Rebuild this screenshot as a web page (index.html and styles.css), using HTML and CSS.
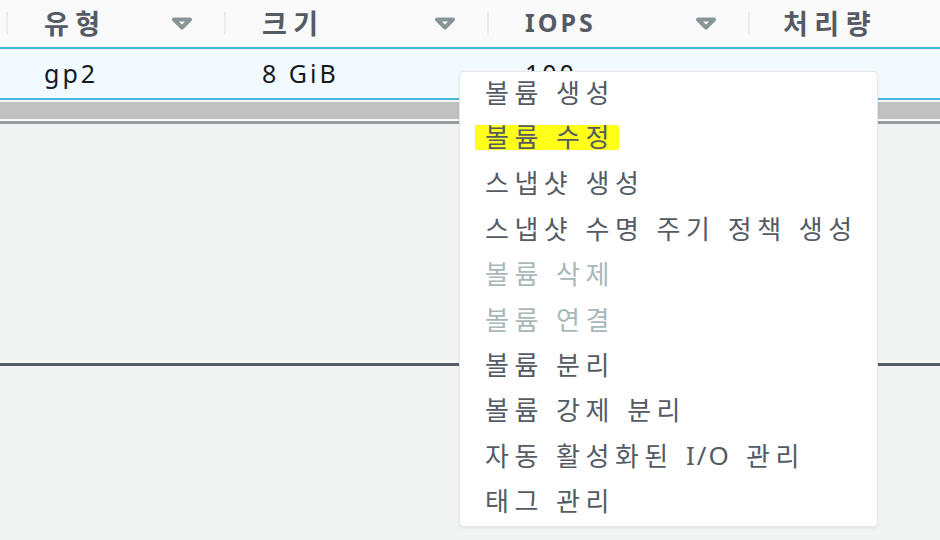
FILE: index.html
```html
<!DOCTYPE html>
<html lang="ko">
<head>
<meta charset="utf-8">
<title>볼륨</title>
<link rel="stylesheet" href="styles.css">
</head>
<body>
<div class="page">
  <div class="table">
    <div class="thead">
      <div class="th th-edge"></div>
      <div class="th"><span class="sep"></span><span class="label">유형</span><svg class="sort" width="22" height="13" viewBox="0 0 22 13"><path d="M3 2.5 H19 L11 10.5 Z" fill="none" stroke="#879596" stroke-width="4" stroke-linejoin="round"/></svg></div>
      <div class="th"><span class="sep"></span><span class="label">크기</span><svg class="sort" width="22" height="13" viewBox="0 0 22 13"><path d="M3 2.5 H19 L11 10.5 Z" fill="none" stroke="#879596" stroke-width="4" stroke-linejoin="round"/></svg></div>
      <div class="th"><span class="sep"></span><span class="label label-latin">IOPS</span><svg class="sort" width="22" height="13" viewBox="0 0 22 13"><path d="M3 2.5 H19 L11 10.5 Z" fill="none" stroke="#879596" stroke-width="4" stroke-linejoin="round"/></svg></div>
      <div class="th th-last"><span class="sep"></span><span class="label">처리량</span></div>
    </div>
    <div class="trow">
      <div class="td"></div>
      <div class="td">gp2</div>
      <div class="td">8 GiB</div>
      <div class="td">100</div>
      <div class="td"></div>
    </div>
    <div class="hscroll">
      <div class="hscroll-bar"></div>
    </div>
  </div>
  <div class="blank"></div>
  <div class="divider"></div>

  <ul class="menu">
    <li class="item">볼륨 생성</li>
    <li class="item"><span class="mark">볼륨 수정</span></li>
    <li class="item">스냅샷 생성</li>
    <li class="item">스냅샷 수명 주기 정책 생성</li>
    <li class="item disabled">볼륨 삭제</li>
    <li class="item disabled">볼륨 연결</li>
    <li class="item">볼륨 분리</li>
    <li class="item">볼륨 강제 분리</li>
    <li class="item">자동 활성화된 <span class="latin">I/O</span> 관리</li>
    <li class="item">태그 관리</li>
  </ul>
</div>
</body>
</html>
```
FILE: styles.css
```css
* { box-sizing: border-box; }
html, body {
  margin: 0;
  padding: 0;
  width: 940px;
  height: 540px;
  overflow: hidden;
  background: #f2f3f3;
  font-family: "Noto Sans", "Noto Sans CJK KR", sans-serif;
}
.page {
  position: relative;
  width: 940px;
  height: 540px;
}
.table {
  display: flex;
  flex-direction: column;
}
.thead {
  display: grid;
  grid-template-columns: 6px 218px 263px 261px 1fr;
  height: 49px;
  background: #fafafa;
  border-bottom: 2px solid #47b8d5;
}
.th {
  display: flex;
  align-items: center;
  padding-bottom: 3px;
}
.sep {
  width: 2px;
  height: 23px;
  margin-top: 3px;
  background: #eaeded;
  flex: none;
}
.label {
  margin-left: 36px;
  font-size: 27px;
  font-weight: 700;
  letter-spacing: 6.5px;
  color: #545b64;
}
.label-latin {
  font-size: 25px;
  letter-spacing: 3px;
}
.th-last .label { margin-left: 33px; }
.sort {
  margin-left: auto;
  margin-right: 31px;
  margin-top: 3px;
  flex: none;
}
.trow {
  display: grid;
  grid-template-columns: 6px 218px 263px 261px 1fr;
  height: 51px;
  background: #f1faff;
  border-bottom: 2px solid #47b8d5;
}
.td {
  display: flex;
  align-items: center;
  padding-left: 38px;
  padding-bottom: 1px;
  font-size: 25px;
  letter-spacing: 3px;
  color: #16191f;
}
.td:first-child { padding-left: 0; }
.hscroll {
  padding-top: 2px;
  background: #f6f6f6;
  border-bottom: 2px solid #fafafa;
}
.hscroll-bar {
  height: 17px;
  background: #c1c1c1;
}
.table::after {
  content: "";
  display: block;
  height: 3px;
  background: #969c9f;
}
.blank {
  height: 238px;
}
.divider {
  height: 4px;
  border-top: 1px solid #fbfbfb;
  background: #545b64;
}
.menu {
  position: absolute;
  left: 459px;
  top: 71px;
  width: 419px;
  margin: 0;
  padding: 0;
  list-style: none;
  background: #ffffff;
  border: 1px solid #e6e8e8;
  border-radius: 5px;
  box-shadow: 0 1px 3px rgba(0, 0, 0, 0.08);
}
.item {
  height: 45.4px;
  display: flex;
  align-items: center;
  padding-left: 25px;
  padding-bottom: 6px;
  font-size: 26px;
  letter-spacing: 5.5px;
  color: #545b64;
  white-space: pre;
}
.item .latin {
  letter-spacing: 2px;
  margin-right: 3px;
}
.item.disabled { color: #aab7b8; }
.mark {
  background: #ffff1a;
  margin-left: -10px;
  padding: 0 4px 0 10px;
  line-height: 25px;
  border-radius: 2px;
}
```
